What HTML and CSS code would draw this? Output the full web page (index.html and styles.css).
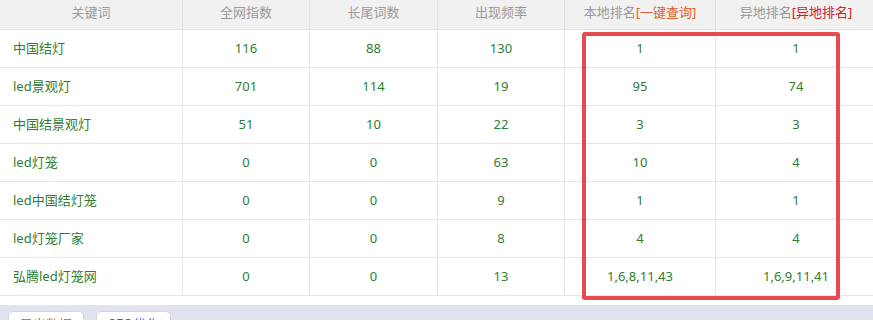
FILE: index.html
```html
<!DOCTYPE html>
<html lang="zh">
<head>
<meta charset="utf-8">
<link rel="stylesheet" href="styles.css">
</head>
<body>
<div class="wrap">
  <table class="kw">
    <colgroup>
      <col class="c1"><col class="c2"><col class="c3"><col class="c4"><col class="c5"><col class="c6">
    </colgroup>
    <thead>
      <tr>
        <th>关键词</th>
        <th>全网指数</th>
        <th>长尾词数</th>
        <th>出现频率</th>
        <th>本地排名<span class="q1">[一键查询]</span></th>
        <th>异地排名<span class="q2">[异地排名]</span></th>
      </tr>
    </thead>
    <tbody>
      <tr><td class="name">中国结灯</td><td>116</td><td>88</td><td>130</td><td>1</td><td>1</td></tr>
      <tr><td class="name">led景观灯</td><td>701</td><td>114</td><td>19</td><td>95</td><td>74</td></tr>
      <tr><td class="name">中国结景观灯</td><td>51</td><td>10</td><td>22</td><td>3</td><td>3</td></tr>
      <tr><td class="name">led灯笼</td><td>0</td><td>0</td><td>63</td><td>10</td><td>4</td></tr>
      <tr><td class="name">led中国结灯笼</td><td>0</td><td>0</td><td>9</td><td>1</td><td>1</td></tr>
      <tr><td class="name">led灯笼厂家</td><td>0</td><td>0</td><td>8</td><td>4</td><td>4</td></tr>
      <tr><td class="name">弘腾led灯笼网</td><td>0</td><td>0</td><td>13</td><td>1,6,8,11,43</td><td>1,6,9,11,41</td></tr>
    </tbody>
  </table>
  <div class="mark"></div>
</div>
<div class="bar">
  <button class="btn orange">导出数据</button>
  <button class="btn blue">SEO优化</button>
</div>
</body>
</html>
```

FILE: styles.css
```css
html, body {
  margin: 0;
  padding: 0;
  background: #ffffff;
  overflow: hidden;
}
body {
  font-family: "Noto Sans", "Noto Sans CJK SC", sans-serif;
  font-size: 13px;
  width: 873px;
  height: 320px;
}
.wrap {
  position: relative;
  width: 877px;
}
.kw {
  width: 877px;
  table-layout: fixed;
  border-collapse: separate;
  border-spacing: 0;
}
.c1 { width: 183px; }
.c2 { width: 127px; }
.c3 { width: 128px; }
.c4 { width: 127px; }
.c5 { width: 151px; }
.c6 { width: 161px; }
.kw th {
  background: #f1f1f1;
  color: #9a9a9a;
  font-weight: normal;
  line-height: 25px;
  padding: 0 0 4px 0;
  border-right: 1px solid #e3e3e3;
  border-bottom: 1px solid #e3e3e3;
  text-align: center;
  white-space: nowrap;
}
.kw td {
  color: #2f7d32;
  line-height: 37px;
  padding: 0;
  border-right: 1px solid #e6e6e6;
  border-bottom: 1px solid #e6e6e6;
  text-align: center;
  white-space: nowrap;
}
.kw td.name {
  text-align: left;
  padding-left: 13px;
}
.q1 { color: #e0622a; }
.q2 { color: #d4202a; }
.mark {
  position: absolute;
  left: 582px;
  top: 32px;
  width: 250px;
  height: 260px;
  border: 4px solid #e54b4f;
  border-radius: 3px;
}
.bar {
  margin-top: 9px;
  background: #dfe3ee;
  height: 20px;
  padding: 6px 0 0 8px;
  display: flex;
  gap: 12px;
}
.btn {
  width: 76px;
  height: 26px;
  background: #ffffff;
  border: 1px solid #cfd4de;
  border-radius: 5px;
  font-family: "Noto Sans CJK SC", sans-serif;
  font-size: 13px;
  padding: 0;
  line-height: 24px;
}
.btn.orange { color: #d9531e; }
.btn.blue { color: #2a6ebb; width: 75px; }
```
